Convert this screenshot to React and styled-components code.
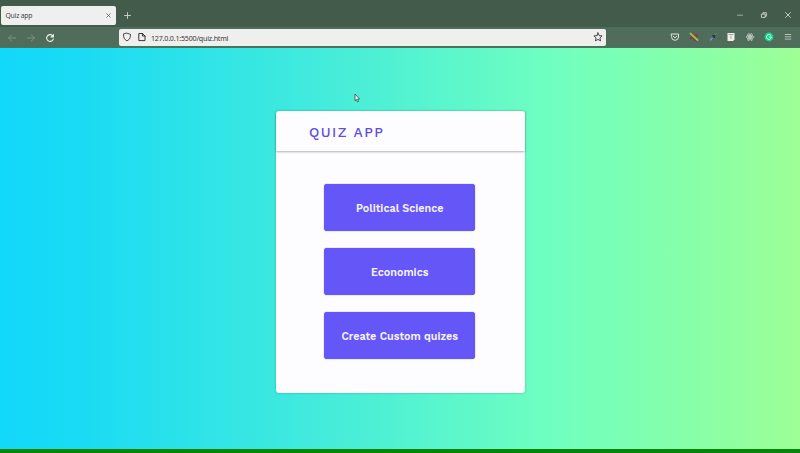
import React from "react";
import styled, { createGlobalStyle } from "styled-components";

const Global = createGlobalStyle`
  * { box-sizing: border-box; }
  html, body { margin: 0; overflow: hidden; }
`;
const Window = styled.div`
  width: 800px;
  height: 453px;
  display: flex;
  flex-direction: column;
  position: relative;
  font-family: "Noto Sans", sans-serif;
`;
const TabBar = styled.div`
  height: 27px;
  background: #435b4a;
  display: flex;
  align-items: flex-end;
  justify-content: space-between;
`;
const Tabs = styled.div`
  display: flex;
  align-items: center;
  gap: 7px;
  padding: 0 0 2px 1px;
`;
const Tab = styled.div`
  width: 115px;
  height: 19px;
  border-radius: 2px;
  background: #efefed;
  color: #45454a;
  display: flex;
  align-items: center;
  justify-content: space-between;
  padding: 0 4.5px 0 4.5px;
  font-size: 6.8px;
  letter-spacing: -0.2px;
`;
const Controls = styled.div`
  display: flex;
  align-items: center;
  gap: 16px;
  padding: 0 8px 8px 0;
`;
const NavBar = styled.div`
  height: 21px;
  background: #506c5a;
  border-bottom: 1px solid #47755d;
  display: flex;
  align-items: center;
`;
const NavButtons = styled.div`
  width: 119px;
  display: flex;
  gap: 9px;
  padding: 1px 0 0 7px;
`;
const Address = styled.div`
  width: 487px;
  height: 17px;
  border-radius: 2px;
  background: #efefed;
  color: #38383d;
  display: flex;
  align-items: center;
  padding: 0 3px;
  font-size: 7.1px;
  letter-spacing: -0.2px;
`;
const Url = styled.span`
  flex: 1;
  padding: 1px 0 0 4px;
`;
const Extensions = styled.div`
  margin-left: auto;
  padding-right: 7.5px;
  display: flex;
  gap: 8.7px;
`;
const Icon = styled.svg`
  width: ${(p) => p.$size || 10}px;
  height: ${(p) => p.$size || 10}px;
  margin-right: ${(p) => p.$gap || 0}px;
  display: block;
  flex: none;
  fill: none;
  stroke: ${(p) => p.$color || "#dce2de"};
  stroke-width: 1;
  stroke-linecap: round;
  stroke-linejoin: round;
`;
const Page = styled.main`
  flex: 1;
  background: linear-gradient(to right, #12d8fa 0%, #1adbf4 10%, #40eadd 38%, #6fffc0 69%, #85ffaa 85%, #9dff96 100%);
  border-bottom: 4px solid #078507;
  display: flex;
  justify-content: center;
  align-items: flex-start;
  padding-top: 63px;
`;
const Card = styled.section`
  width: 249px;
  height: 282px;
  border-radius: 3px;
  background: #fdfcff;
  box-shadow: 0 0 2px rgba(30, 90, 80, 0.5);
  font-family: "Work Sans", Inter, sans-serif;
`;
const CardHeader = styled.header`
  height: 40px;
  display: flex;
  align-items: center;
  padding: 1px 0 0 33.5px;
  box-shadow: 0 1px 2px rgba(40, 40, 60, 0.35);
`;
const Title = styled.h1`
  margin: 0;
  color: #5c50dc;
  font-size: 13.9px;
  font-weight: 500;
  letter-spacing: 1.45px;
  line-height: 16px;
`;
const Options = styled.div`
  display: flex;
  flex-direction: column;
  align-items: center;
  gap: 17px;
  padding-top: 33px;
`;
const Option = styled.button`
  width: 151px;
  height: 47px;
  margin-right: 0.5px;
  padding: 2px 0 0;
  border: 0;
  border-radius: 3px;
  background: #6557f7;
  box-shadow: 0 0 1px #5147bd;
  color: #f6f3ff;
  font: 600 10.8px "Work Sans", Inter, sans-serif;
`;
const Cursor = styled.svg`
  position: absolute;
  left: 354px;
  top: 93px;
  width: 6px;
  height: 10px;
`;

const options = ["Political Science", "Economics", "Create Custom quizes"];

const extensionIcons = [
  <Icon key="pocket" viewBox="0 0 10 10"><path d="M1.5 2h7v3a3.5 3.3 0 0 1-7 0zM3.2 4.2 5 5.8l1.8-1.6" /></Icon>,
  <Icon key="brush" viewBox="0 0 10 10"><path d="M.8.8h3l2 1.700L9 2v3L7 6l2 3H5.500L4 7H.8l1-3z" fill="#8c3d2f" stroke="none" /><path d="m1.500 1.500 7 6.500" stroke="#8bc56a" strokeWidth="1.900" /></Icon>,
  <Icon key="picker" viewBox="0 0 10 10"><path d="m2.400 8 2.500-2.700" stroke="#6d91df" strokeWidth="1.500" /><path d="m5 5 2-2M4.800 3.700l1.500 1.500" stroke="#273239" strokeWidth="1.300" /><path d="m7.500 2.300.3-.3" stroke="#c2cbc8" /></Icon>,
  <Icon key="reader" viewBox="0 0 10 10"><path d="M1.500 1h7v6.500L7 9H1.500z" fill="#efefec" stroke="none" /><path d="M2.800 2.500H7M5 4v2.500" stroke="#87938b" strokeWidth=".8" /></Icon>,
  <Icon key="react" viewBox="0 0 10 10" $color="#c0cac3"><g strokeWidth=".75"><ellipse cx="5" cy="5" rx="3.800" ry="1.600" /><ellipse cx="5" cy="5" rx="3.800" ry="1.600" transform="rotate(60 5 5)" /><ellipse cx="5" cy="5" rx="3.800" ry="1.600" transform="rotate(120 5 5)" /></g><circle cx="5" cy="5" r=".8" fill="#c7cfca" /></Icon>,
  <Icon key="grammar" viewBox="0 0 10 10"><circle cx="5" cy="5" r="4.400" fill="#16d493" stroke="none" /><path d="M7 3.500A2.500 2.500 0 1 0 7.200 6V5H5.400" stroke="#d5ffed" strokeWidth=".9" /></Icon>,
  <Icon key="menu" viewBox="0 0 10 10" $color="#b5c1b9"><path d="M2.200 2.500h5.600M2.200 4.800h5.600M2.200 7.100h5.600" /></Icon>,
];

export default function App() {
  return (
    <Window>
      <Global />
      <TabBar>
        <Tabs>
          <Tab>Quiz app<Icon viewBox="0 0 8 8" $size={7} $color="#55555a"><path d="m2 2 4 4M6 2 2 6" strokeWidth=".85" /></Icon></Tab>
          <Icon viewBox="0 0 10 10" $size={9}><path d="M5 1.700v6.600M1.700 5h6.600" strokeWidth=".9" /></Icon>
        </Tabs>
        <Controls>
          <Icon viewBox="0 0 8 8" $size={8} $color="#b9c4bc"><path d="M1.500 4.200h5" strokeWidth=".8" /></Icon>
          <Icon viewBox="0 0 8 8" $size={8}><path d="M1.800 3h3.400v3.400H1.800zM3 3V1.700h3.400v3.500H5.200" strokeWidth=".8" /></Icon>
          <Icon viewBox="0 0 8 8" $size={8}><path d="m1.500 1.500 5 5m0-5-5 5" strokeWidth=".8" /></Icon>
        </Controls>
      </TabBar>
      <NavBar>
        <NavButtons>
          <Icon viewBox="0 0 10 10" $color="#83958a"><path d="M8.600 5h-7m3-3-3 3 3 3" strokeWidth=".9" /></Icon>
          <Icon viewBox="0 0 10 10" $color="#83958a"><path d="M1.400 5h7m-3-3 3 3-3 3" strokeWidth=".9" /></Icon>
          <Icon viewBox="0 0 10 10" $color="#eef1ef"><path d="M8.100 3.500A3.400 3.400 0 1 0 8.300 6M8.400 1.500v2.400H6" strokeWidth="1.100" /></Icon>
        </NavButtons>
        <Address>
          <Icon viewBox="0 0 10 10" $color="#37373d" $gap={5}><path d="M5 1.200 8.500 2.300c.1 3-.6 5.100-3.500 6.600C2.100 7.400 1.400 5.300 1.500 2.300z" strokeWidth=".9" /></Icon>
          <Icon viewBox="0 0 10 10" $color="#37373d"><path d="M2.200 1.500h3.300L8 4v4.600H2.200zM5.400 1.500V4H8" /></Icon>
          <Url>127.0.0.1:5500/quiz.html</Url>
          <Icon viewBox="0 0 10 10" $color="#37373d"><path d="m5 .9 1.200 2.700 2.900.3-2.200 2 .7 3L5 7.400 2.400 8.900l.7-3-2.200-2 2.900-.3z" strokeWidth=".9" /></Icon>
        </Address>
        <Extensions>{extensionIcons}</Extensions>
      </NavBar>
      <Page>
        <Card>
          <CardHeader><Title>QUIZ APP</Title></CardHeader>
          <Options>
            {options.map((label) => <Option key={label}>{label}</Option>)}
          </Options>
        </Card>
      </Page>
      <Cursor viewBox="0 0 6 10"><path d="m1 1 4.500 5H3.600l.9 2.300-1.200.5-.9-2.300L1 7.700z" fill="#f5f8fa" stroke="#39444a" strokeWidth=".8" /></Cursor>
    </Window>
  );
}
